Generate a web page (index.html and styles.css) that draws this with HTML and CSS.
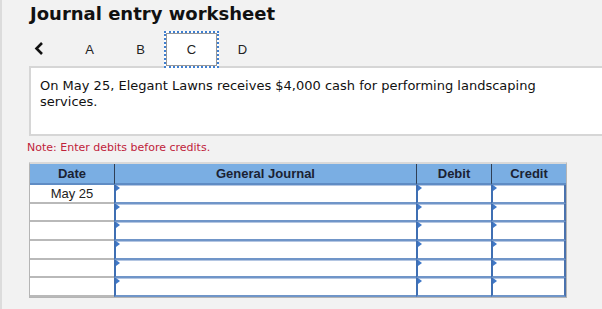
FILE: index.html
```html
<!DOCTYPE html>
<html lang="en">
<head>
  <meta charset="UTF-8" />
  <title>Journal entry worksheet</title>
  <link rel="stylesheet" href="styles.css">
</head>
<body>
  <div class="page">
    <h1>Journal entry worksheet</h1>

    <div class="tabs">
      <div class="tab tab-back">
        <svg width="10" height="13" viewBox="0 0 10 13"><path d="M8 1 L2.5 6.5 L8 12" fill="none" stroke="#111" stroke-width="2.6"/></svg>
      </div>
      <div class="tab">A</div>
      <div class="tab">B</div>
      <div class="tab active">C</div>
      <div class="tab">D</div>
    </div>

    <div class="question">
      <p>On May 25, Elegant Lawns receives $4,000 cash for performing landscaping services.</p>
    </div>

    <p class="note">Note: Enter debits before credits.</p>

    <table class="journal">
      <thead>
        <tr>
          <th class="col-date">Date</th>
          <th class="col-desc">General Journal</th>
          <th class="col-amt">Debit</th>
          <th class="col-amt">Credit</th>
        </tr>
      </thead>
      <tbody>
        <tr>
          <td class="date">May 25</td>
          <td class="field"></td>
          <td class="field"></td>
          <td class="field"></td>
        </tr>
        <tr><td class="date"></td><td class="field"></td><td class="field"></td><td class="field"></td></tr>
        <tr><td class="date"></td><td class="field"></td><td class="field"></td><td class="field"></td></tr>
        <tr><td class="date"></td><td class="field"></td><td class="field"></td><td class="field"></td></tr>
        <tr><td class="date"></td><td class="field"></td><td class="field"></td><td class="field"></td></tr>
        <tr><td class="date"></td><td class="field"></td><td class="field"></td><td class="field"></td></tr>
      </tbody>
    </table>
  </div>
</body>
</html>
```

FILE: styles.css
```css
body {
  margin: 0;
  background-color: #f2f2f2;
  font-family: "DejaVu Sans", Verdana, sans-serif;
  color: #111;
  overflow: hidden;
}
.page {
  border-left: 2px solid #dcdcdc;
  height: 309px;
  box-sizing: border-box;
}
h1 {
  margin: 0;
  padding: 3px 0 0 28px;
  font-size: 18px;
  line-height: 22px;
  font-weight: bold;
}
.tabs {
  display: flex;
  margin: 6px 0 -2px 11px;
  height: 37px;
  position: relative;
  z-index: 1;
}
.tab {
  width: 51px;
  display: flex;
  justify-content: center;
  align-items: center;
  font-family: "Liberation Sans", Arial, sans-serif;
  font-size: 13px;
  color: #222;
  box-sizing: border-box;
}
.tab-back svg {
  display: block;
  margin-top: -3px;
}
.tab.active {
  width: 55px;
  margin: 0 -2px;
  background: #fff;
  border: 2px dotted #3f7fd0;
  box-shadow: inset 0 0 0 1px #999;
}
.question {
  margin: 0 -20px 0 27px;
  height: 70px;
  box-sizing: border-box;
  background: #fff;
  border: 2px solid #d6d6d6;
  padding: 10px 0 0 9px;
}
.question p {
  margin: 0;
  width: 540px;
  font-size: 13px;
  line-height: 16px;
}
.note {
  margin: 5px 0 0 25px;
  font-size: 11px;
  line-height: 13px;
  color: #c0223a;
}
.journal {
  margin: 8px 0 0 27px;
  border-collapse: separate;
  border-spacing: 0;
  width: 538px;
  border: 1px solid #b5b5b5;
  border-top: 2px solid #d9d9d9;
  font-family: "Liberation Sans", Arial, sans-serif;
  font-size: 13px;
  background: #fff;
}
.journal th {
  background: #7aaee3;
  height: 19px;
  padding: 0;
  font-weight: bold;
  color: #1a2233;
  border-left: 1px solid #2f3f55;
  border-bottom: 2px solid #5f8cc4;
}
.journal th:first-child {
  border-left: none;
}
.col-date { width: 84px; }
.col-desc { width: 301px; }
.col-amt { width: 74px; }
.journal td {
  height: 16.7px;
  padding: 0;
}
.journal td.date {
  text-align: center;
  color: #222;
  border-bottom: 2px solid #b9b9b9;
}
.journal td.field {
  position: relative;
  border-left: 2px solid #3f6fb3;
  border-bottom: 2px solid #7095c8;
  box-shadow: inset 0 1px 0 #b4c6e2;
}
.journal td.field::before {
  content: "";
  position: absolute;
  left: 0;
  top: 0;
  border-top: 3px solid transparent;
  border-bottom: 3px solid transparent;
  border-left: 4px solid #3f78c8;
}
.journal td.field:last-child {
  border-right: 2px solid #4a72ad;
}
```
